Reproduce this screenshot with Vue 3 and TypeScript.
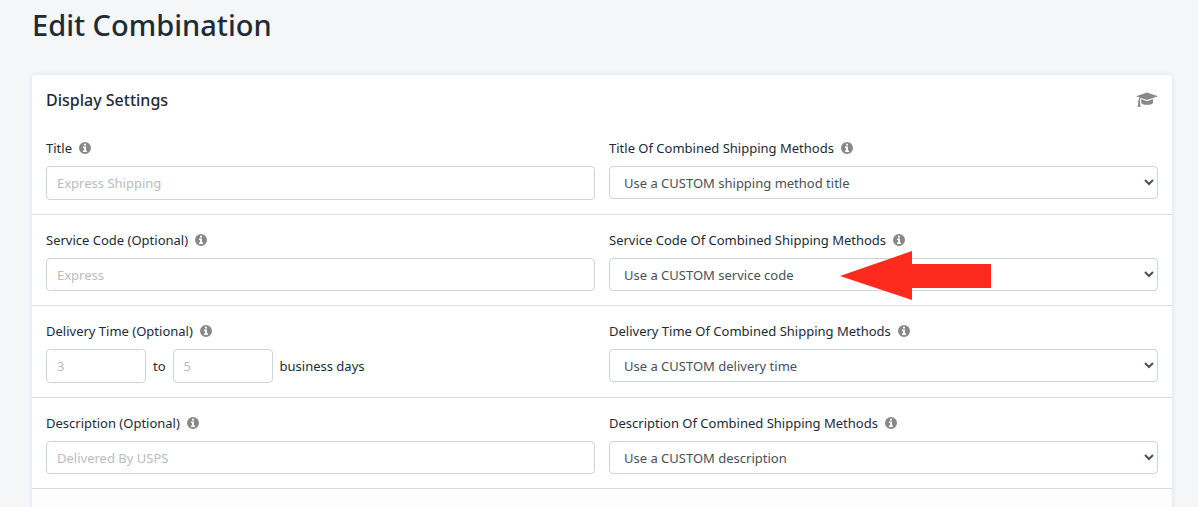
<script setup lang="ts">
import { ref } from 'vue'

interface Setting {
  id: string
  label: string
  placeholders: string[]
  methodLabel: string
  option: string
  pointed?: boolean
}

const settings = ref<Setting[]>([
  { id: 'title', label: 'Title', placeholders: ['Express Shipping'], methodLabel: 'Title Of Combined Shipping Methods', option: 'Use a CUSTOM shipping method title' },
  { id: 'code', label: 'Service Code (Optional)', placeholders: ['Express'], methodLabel: 'Service Code Of Combined Shipping Methods', option: 'Use a CUSTOM service code', pointed: true },
  { id: 'time', label: 'Delivery Time (Optional)', placeholders: ['3', '5'], methodLabel: 'Delivery Time Of Combined Shipping Methods', option: 'Use a CUSTOM delivery time' },
  { id: 'description', label: 'Description (Optional)', placeholders: ['Delivered By USPS'], methodLabel: 'Description Of Combined Shipping Methods', option: 'Use a CUSTOM description' },
])

const infoPath = 'M6 0a6 6 0 1 0 0 12A6 6 0 0 0 6 0zM5 1.7h2v1.8H5zM4 4.6h3v4h1v1.5H4V8.6h1V6.1H4z'
</script>

<template>
  <main class="page">
    <h1 class="page-title">Edit Combination</h1>
    <section class="card">
      <header class="card-head">
        <h2>Display Settings</h2>
        <a href="#" class="guide" aria-label="Guide">
          <svg width="22" height="16" viewBox="0 0 22 16" aria-hidden="true">
            <path d="M11 0.5L22 4.2L11 8L5 5.9Q3.8 6.4 3.8 8.2Q4.5 8.8 4 9.6L4.5 15H1.7L2.4 9.6Q1.8 8.7 2.6 8.1Q2.7 6.4 3.5 5.4L0 4.2Z" />
            <path d="M5.2 7.1L11 9.2L17 7.1V10.4Q16.6 12.8 11 12.8Q5.6 12.8 5.2 10.4Z" />
          </svg>
        </a>
      </header>
      <div v-for="s in settings" :key="s.id" class="row">
        <div class="field">
          <div class="caption">
            <label :for="s.id">{{ s.label }}</label>
            <svg class="info" width="12" height="12" viewBox="0 0 12 12" aria-hidden="true"><path fill-rule="evenodd" :d="infoPath" /></svg>
          </div>
          <div v-if="s.placeholders.length > 1" class="range">
            <input :id="s.id" type="text" :placeholder="s.placeholders[0]" />
            <label :for="s.id + '-max'">to</label>
            <input :id="s.id + '-max'" type="text" :placeholder="s.placeholders[1]" />
            <span>business days</span>
          </div>
          <input v-else :id="s.id" type="text" :placeholder="s.placeholders[0]" />
        </div>
        <div class="field">
          <div class="caption">
            <label :for="s.id + '-method'">{{ s.methodLabel }}</label>
            <svg class="info" width="12" height="12" viewBox="0 0 12 12" aria-hidden="true"><path fill-rule="evenodd" :d="infoPath" /></svg>
          </div>
          <select :id="s.id + '-method'">
            <option>{{ s.option }}</option>
          </select>
          <svg v-if="s.pointed" class="arrow" width="152" height="50" viewBox="0 0 152 50" aria-hidden="true">
            <path d="M0 25L72 0V13H151V37H72V49Z" />
          </svg>
        </div>
      </div>
    </section>
  </main>
</template>

<style>
body {
  background: #f4f6f8;
}
</style>

<style scoped>
.page {
  padding: 4px 26px 0 32px;
  overflow: hidden;
  font-family: "Segoe UI", "Noto Sans", "Open Sans", sans-serif;
  font-size: 13px;
  line-height: 20px;
  color: #212b36;
}
.page-title {
  margin: 0 0 29px;
  font-size: 29px;
  line-height: 42px;
  font-weight: 500;
}
.card {
  border-radius: 4px;
  box-shadow: 0 0 5px rgba(33, 43, 54, 0.1);
  background: #fdfdfd;
  padding-bottom: 32px;
}
.card-head {
  display: flex;
  justify-content: space-between;
  align-items: center;
  box-sizing: border-box;
  height: 48px;
  padding: 2px 14px 0;
  background: #fff;
  border-radius: 4px 4px 0 0;
}
.card-head h2 {
  margin: 0;
  font-size: 16px;
  line-height: 24px;
  font-weight: 500;
}
.guide {
  display: flex;
}
.guide svg,
.info {
  fill: #888;
}
.row {
  display: grid;
  grid-template-columns: 1fr 1fr;
  gap: 14px;
  padding: 15px 14px 14px;
  background: #fff;
  border-bottom: 1px solid #dadcde;
}
.field {
  position: relative;
  min-width: 0;
}
.caption {
  display: flex;
  align-items: center;
  gap: 7px;
  margin-bottom: 8px;
}
input,
select {
  display: block;
  box-sizing: border-box;
  width: 100%;
  height: 33px;
  margin: 0;
  border: 1px solid #ced4da;
  border-radius: 4px;
  background: #fff;
  font: inherit;
  color: #495057;
}
input {
  padding: 0 10px;
}
.row:nth-child(even) input {
  height: 34px;
}
select {
  padding: 0 10px;
}
input::placeholder {
  color: #b9bcbf;
  opacity: 1;
}
.range {
  display: flex;
  align-items: center;
  gap: 7px;
}
.range input {
  width: 100px;
}
.arrow {
  position: absolute;
  left: 231px;
  top: 21px;
  fill: #fc2b1d;
  pointer-events: none;
}
</style>
